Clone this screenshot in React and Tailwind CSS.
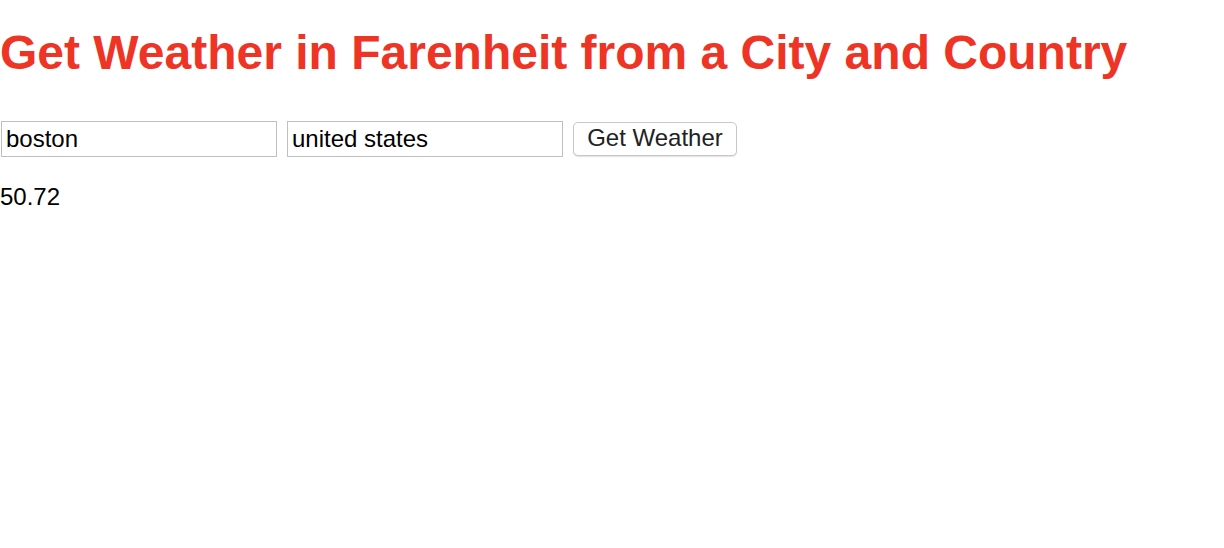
export default function App() {
  return (
    <div className="min-h-screen bg-white font-['Liberation_Sans',Arial,sans-serif] text-black">
      <h1 className="pt-[24px] text-[48px] font-bold leading-[58px] text-[#ee3424]">
        Get Weather in Farenheit from a City and Country
      </h1>
      <div className="mt-[39px] flex items-center">
        <input
          type="text"
          defaultValue="boston"
          className="ml-[1px] h-[36px] w-[276px] border border-[#bfbfbf] px-[4px] text-[24px] leading-[28px] outline-none"
        />
        <input
          type="text"
          defaultValue="united states"
          className="ml-[10px] h-[36px] w-[276px] border border-[#bfbfbf] px-[4px] text-[24px] leading-[28px] outline-none"
        />
        <button
          type="button"
          className="ml-[10px] h-[34px] w-[164px] rounded-[5px] border border-[#c8c8c8] bg-white pb-[2px] text-[24px] leading-[28px] text-[#222] shadow-[0_1px_1px_rgba(0,0,0,0.12)]"
        >
          Get Weather
        </button>
      </div>
      <p className="mt-[26px] text-[24px] leading-[28px]">50.72</p>
    </div>
  );
}
